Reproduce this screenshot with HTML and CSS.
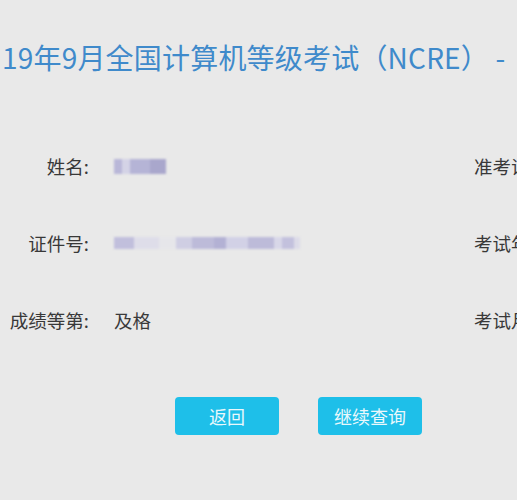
FILE: index.html
```html
<!DOCTYPE html>
<html lang="zh-CN">
<head>
<meta charset="utf-8">
<link rel="stylesheet" href="styles.css">
</head>
<body>
<div class="page">
  <h1 class="title">19年9月全国计算机等级考试（NCRE） -</h1>
  <div class="rows">
    <div class="row">
      <div class="label">姓名:</div>
      <div class="value"><span class="blur blur-name"></span></div>
      <div class="rlabel">准考证号:</div>
    </div>
    <div class="row">
      <div class="label">证件号:</div>
      <div class="value"><span class="blur blur-id"></span></div>
      <div class="rlabel">考试年份:</div>
    </div>
    <div class="row">
      <div class="label">成绩等第:</div>
      <div class="value text">及格</div>
      <div class="rlabel">考试月份:</div>
    </div>
  </div>
  <div class="actions">
    <button class="btn">返回</button>
    <button class="btn">继续查询</button>
  </div>
</div>
</body>
</html>
```
FILE: styles.css
```css
html, body {
  margin: 0;
  padding: 0;
  background: #e9e9e9;
  overflow: hidden;
}
.page {
  width: 517px;
  height: 500px;
  overflow: hidden;
  font-family: "Noto Sans CJK SC", "Noto Sans", sans-serif;
}
.title {
  margin: 0;
  padding: 38px 0 0 2px;
  font-size: 28px;
  font-weight: 400;
  line-height: 38px;
  letter-spacing: 0.2px;
  color: #3f8acb;
  white-space: nowrap;
}
.rows {
  margin-top: 77px;
  display: flex;
  flex-direction: column;
  gap: 51px;
}
.row {
  display: grid;
  grid-template-columns: 89px 335px auto;
  column-gap: 25px;
  align-items: center;
  height: 26px;
  font-size: 18.5px;
  color: #383838;
  white-space: nowrap;
}
.label {
  text-align: right;
}
.value {
  display: flex;
  align-items: center;
}
.text {
  color: #3a3a3a;
}
.rlabel {
  overflow: hidden;
}
.blur {
  display: block;
  height: 15px;
  filter: blur(1px);
}
.blur-name {
  width: 52px;
  background: linear-gradient(90deg,
    #b9b7d8 0 8px, #d4d3e6 8px 16px, #b5b4d6 16px 36px, #a9a7cc 36px 52px);
}
.blur-id {
  width: 186px;
  height: 12px;
  background: linear-gradient(90deg,
    #c1bfdc 0 20px, #dedde9 20px 45px, #e6e6ea 45px 62px,
    #cfcee3 62px 78px, #bdbbd9 78px 100px, #b3b1d4 100px 112px,
    #d2d1e6 112px 134px, #bdbbd9 134px 160px, #d8d7e8 160px 168px,
    #c3c1dd 168px 180px, #dcdbe8 180px 186px);
}
.actions {
  margin-top: 64px;
  display: flex;
  gap: 39px;
  padding-left: 175px;
}
.btn {
  width: 104px;
  height: 38px;
  border: none;
  border-radius: 4px;
  background: #1ebfe9;
  color: #eaf8fc;
  font-family: "Noto Sans CJK SC", sans-serif;
  font-size: 18px;
  padding: 0;
}
```
